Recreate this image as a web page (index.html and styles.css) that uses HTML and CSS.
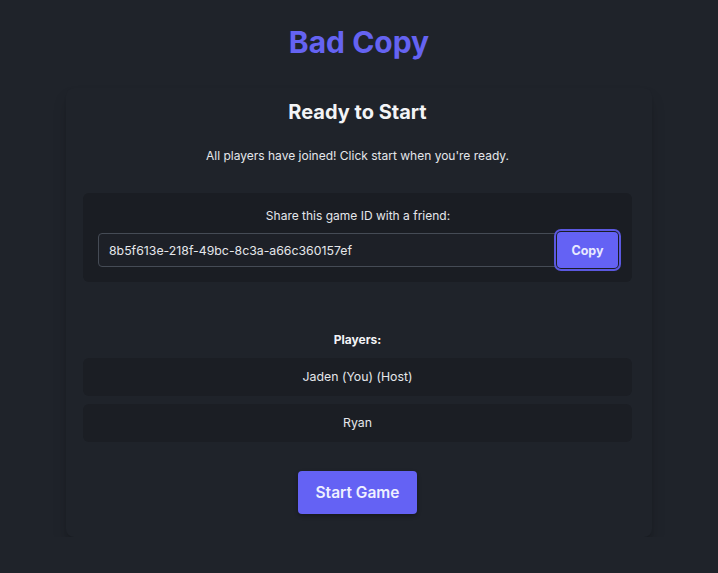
FILE: index.html
```html
<!DOCTYPE html>
<html>
<head>
  <title>Bad Copy</title>
  <link rel="stylesheet" href="styles.css">
</head>
<body>
  <h1 class="logo">Bad Copy</h1>
  <div class="card">
    <h2 class="card-title">Ready to Start</h2>
    <p class="status">All players have joined! Click start when you're ready.</p>

    <div class="share-box">
      <p class="share-label">Share this game ID with a friend:</p>
      <div class="share-row">
        <input type="text" class="game-id" value="8b5f613e-218f-49bc-8c3a-a66c360157ef" readonly>
        <button class="copy-btn">Copy</button>
      </div>
    </div>

    <h3 class="players-title">Players:</h3>
    <ul class="players">
      <li class="player">Jaden (You) (Host)</li>
      <li class="player">Ryan</li>
    </ul>

    <div class="actions">
      <button class="start-btn">Start Game</button>
    </div>
  </div>
</body>
</html>
```

FILE: styles.css
```css
body {
  font-family: Inter, "Noto Sans", sans-serif;
  background: #1f232a;
  color: #e5e7eb;
  margin: 0;
  padding-top: 24px;
}
.logo {
  margin: 0;
  font-size: 30px;
  line-height: 36px;
  font-weight: 700;
  text-align: center;
  color: #6563f2;
}
.card {
  width: 549px;
  margin: 28px auto 0;
  padding: 10px 20px 23px 17px;
  border-radius: 8px;
  background: #1f232a;
  box-shadow: 0 10px 15px -3px rgba(0, 0, 0, 0.25), 0 4px 6px -4px rgba(0, 0, 0, 0.2);
}
.card-title {
  margin: 0;
  font-size: 20px;
  line-height: 28px;
  font-weight: 700;
  text-align: center;
  color: #f3f4f6;
}
.status {
  margin: 20px 0 0;
  font-size: 12px;
  line-height: 20px;
  text-align: center;
}
.share-box {
  margin-top: 27px;
  padding: 13px 14px 14px 15px;
  background: #1a1d23;
  border-radius: 6px;
}
.share-label {
  margin: 0 0 6px;
  font-size: 12px;
  line-height: 20px;
  text-align: center;
}
.share-row {
  display: flex;
  align-items: center;
}
.game-id {
  flex: 1;
  height: 34px;
  box-sizing: border-box;
  padding: 0 10px;
  font-family: inherit;
  font-size: 12.3px;
  color: #e5e7eb;
  background: #1d2027;
  border: 1px solid #454b55;
  border-radius: 4px 0 0 4px;
}
.copy-btn {
  width: 61px;
  height: 36px;
  margin-left: -2px;
  font-family: inherit;
  font-size: 12.5px;
  font-weight: 700;
  color: #e8e9ff;
  background: #6462f4;
  border: none;
  border-radius: 4px;
  box-shadow: 0 0 0 1px #1a1d23, 0 0 0 3px #5b58e0;
}
.players-title {
  margin: 48px 0 8px;
  font-size: 12px;
  line-height: 20px;
  font-weight: 700;
  text-align: center;
  color: #f3f4f6;
}
.players {
  list-style: none;
  margin: 0;
  padding: 0;
}
.player {
  height: 38px;
  line-height: 38px;
  margin-bottom: 8px;
  font-size: 12.3px;
  text-align: center;
  background: #1b1e24;
  border-radius: 6px;
}
.actions {
  margin-top: 29px;
  text-align: center;
}
.start-btn {
  height: 43px;
  padding: 0 18px;
  font-family: inherit;
  font-size: 15.5px;
  font-weight: 600;
  color: #eef0ff;
  background: #6462f4;
  border: none;
  border-radius: 4px;
  box-shadow: 0 2px 4px rgba(0, 0, 0, 0.3);
}
```
